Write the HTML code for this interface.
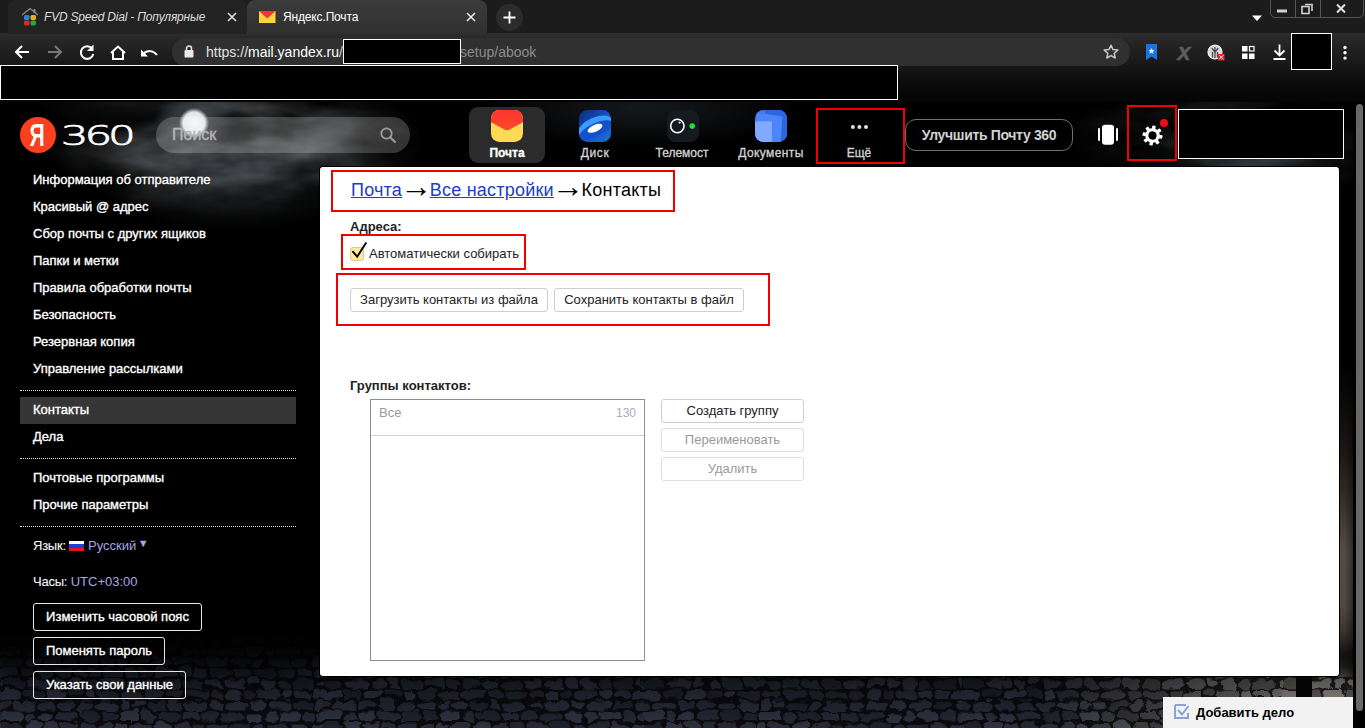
<!DOCTYPE html>
<html lang="ru">
<head>
<meta charset="utf-8">
<title>Яндекс.Почта</title>
<style>
*{box-sizing:border-box;margin:0;padding:0}
html,body{width:1365px;height:728px;overflow:hidden;background:#000;font-family:"Liberation Sans",sans-serif;}
.abs{position:absolute}
#root{position:relative;width:1365px;height:728px;overflow:hidden;background:#000}

/* ---------- browser chrome ---------- */
#chrome{position:absolute;left:0;top:0;width:1365px;height:102px;background:linear-gradient(#1c1c1c 0,#1c1c1c 33px,#2e2e2e 33px,#272727 40px,#1f1f1f 52px,#171717 66px,#0b0b0b 84px,#040404 102px)}
.tab{position:absolute;top:0;height:34px;border-radius:8px 8px 0 0;font-size:12px;line-height:34px;white-space:nowrap}
#tab1{left:8px;width:240px;background:#232323;color:#dcdcdc;font-style:italic;letter-spacing:-.2px}
#tab2{left:247px;width:240px;background:linear-gradient(#3c3c3c,#2f2f2f);color:#fff;letter-spacing:-.15px}
.tab .ttl{position:absolute;top:0}
.tab .cls{position:absolute;top:11px;width:10px;height:10px}
#newtab{position:absolute;left:495.500px;top:3.500px;width:27px;height:27px;border-radius:50%;background:#2c2c2c}
#winbtn{position:absolute;left:1270px;top:-2px;width:94px;height:20px;border:1px solid #555;border-radius:0 0 5px 5px}
#winbtn i{position:absolute;top:0;width:1px;height:18px;background:#555}
#urlbar{position:absolute;left:172px;top:38px;width:958px;height:28px;border-radius:14px;background:#303030}
.url{position:absolute;top:38px;height:28px;line-height:28px;font-size:14px;white-space:nowrap}
.redact{position:absolute;background:#000;border:1px solid #fff}

/* ---------- page ---------- */
#page{position:absolute;left:0;top:102px;width:1365px;height:626px;overflow:hidden;background:#000}

#bg{position:absolute;left:0;top:0;width:1365px;height:626px;background:
 radial-gradient(circle 15px at 194px 21px,rgba(244,245,246,1) 0,rgba(234,236,238,.97) 72%,rgba(180,186,192,.55) 88%,rgba(0,0,0,0) 100%),
 radial-gradient(ellipse 40px 30px at 194px 21px,rgba(130,138,146,.55),rgba(0,0,0,0) 100%),
 radial-gradient(ellipse 110px 30px at 240px 60px,rgba(60,66,72,.4),rgba(0,0,0,0) 100%),
 radial-gradient(ellipse 120px 24px at 150px 2px,rgba(40,45,50,.4),rgba(0,0,0,0) 100%),
 radial-gradient(ellipse 160px 40px at 640px 6px,rgba(40,46,52,.55),rgba(0,0,0,0) 100%),
 radial-gradient(ellipse 140px 60px at 230px 70px,rgba(48,52,56,.6),rgba(0,0,0,0) 100%),
 radial-gradient(ellipse 120px 40px at 1250px 60px,rgba(38,44,48,.7),rgba(0,0,0,0) 100%),
 #000}
#stones{position:absolute;left:0;top:560px;width:1353px;height:66px;background:
 linear-gradient(90deg,rgba(0,0,0,0) 0,rgba(0,0,0,0) 70%,rgba(70,62,54,.55) 92%,rgba(90,84,76,.6) 100%),
 linear-gradient(rgba(0,0,0,1) 0,rgba(20,22,30,1) 30%,rgba(34,37,48,1) 70%,rgba(40,43,54,1) 100%)}
#wall{position:absolute;left:1339px;top:260px;width:14px;height:314px;background:linear-gradient(90deg,rgba(0,0,0,0) 40%,rgba(0,0,0,.4)),linear-gradient(rgba(0,0,0,1) 0,#1c1917 30%,#3d3631 48%,#554b44 60%,#51473f 78%,#3a332e 86%,#141210 93%,#1a1918 97%,#3a3835 100%)}
#sbtrack{position:absolute;left:1353px;top:0;width:12px;height:626px;background:#000}
#sbthumb{position:absolute;left:1356px;top:2px;width:7px;height:607px;border-radius:4px;background:#686868}
#hdr{position:absolute;left:0;top:0;width:1353px;height:66px}
#yalogo{position:absolute;left:20px;top:15px;width:36px;height:36px;border-radius:50%;background:#fc3f1d;color:#fff;font-weight:bold;font-size:31px;line-height:36px;text-align:center}
#yalogo span{display:inline-block;position:relative;left:-1px;top:1px;transform:scaleX(.68)}
#search{position:absolute;left:156px;top:15px;width:254px;height:36px;border-radius:18px;background:rgba(255,255,255,.2)}
#search span{position:absolute;left:16px;top:0;line-height:35px;font-size:16px;color:#b6b6b6;-webkit-text-stroke:.4px #b6b6b6}
#appsel{position:absolute;left:469px;top:5px;width:76px;height:56px;border-radius:9px;background:#2b2b2b}
.applbl{position:absolute;top:43px;font-size:12px;line-height:16px;text-align:center;color:#d4d4d4;white-space:nowrap;-webkit-text-stroke:.3px currentColor}
.redbox{position:absolute;border:2px solid #f20000}
#upg{position:absolute;left:905px;top:17px;width:168px;height:32px;border:1px solid #6f6f6f;border-radius:11px;color:#d2d2d2;font-weight:bold;font-size:14px;line-height:30px;text-align:center;letter-spacing:-.35px;white-space:nowrap}
#side{position:absolute;left:0;top:0;width:320px;height:626px}
#side .it{position:absolute;left:20px;width:276px;height:26px;padding-left:13px;line-height:26px;font-size:13px;color:#fff;white-space:nowrap;-webkit-text-stroke:.35px #fff}
#side .it.sel{background:#363636;height:27px}
#side .it.pl{-webkit-text-stroke:.1px #fff;color:#f4f4f4}
#side .dot{position:absolute;left:20px;width:276px;height:0;border-top:1px dotted #d8d8d8}
#side .lnk{color:#a8a5e0;-webkit-text-stroke:0}
.flag{display:inline-block;width:15px;height:10px;vertical-align:-1px;background:linear-gradient(#fff 0,#fff 33%,#1b3fd0 33%,#1b3fd0 66%,#e8141c 66%)}
.sbtn{position:absolute;left:33px;height:28px;border:1px solid #e8e8e8;border-radius:3px;color:#fff;font-size:13px;line-height:26px;text-align:center;white-space:nowrap;-webkit-text-stroke:.35px #fff}
#panel{position:absolute;left:320px;top:65px;width:1019px;height:509px;border-radius:3px;box-shadow:0 0 0 1px #000;background:#fff;color:#000}
#crumb{position:absolute;left:31px;top:11px;letter-spacing:.22px;font-size:18px;line-height:24px;white-space:nowrap;color:#000}
#crumb .ar{font-size:32px;line-height:0;position:relative;top:1px;margin:0 -7.400px;letter-spacing:0}
#crumb a{color:#1a3dc1;text-decoration:underline}
#panel .h{position:absolute;left:30px;font-weight:bold;font-size:13px;line-height:16px;white-space:nowrap;color:#222}
.t13{position:absolute;font-size:13px;line-height:16px;white-space:nowrap;color:#222}
#cb{position:absolute;left:30px;top:80px;width:14px;height:14px;border:1px solid #dccb85;border-radius:3px;background:#fce9a2}
.btn{position:absolute;height:24px;border:1px solid #cfcfcf;border-radius:3px;background:#fff;font-size:13px;line-height:22px;text-align:center;color:#222;white-space:nowrap}
.btn.dis{color:#9a9a9a;border-color:#dedede}
#list{position:absolute;left:50px;top:232px;width:275px;height:262px;border:1px solid #8f8f8f;background:#fff}
#list .row{height:36px;border-bottom:1px solid #cfcfcf;font-size:13px;line-height:26px;color:#9a9a9a;padding:0 8px}
#list .cnt{float:right;font-size:12px;color:#a9a9c8}
#todo{position:absolute;left:1163px;top:595px;width:190px;height:31px;background:#f2f2f2;font-weight:bold;font-size:13px;line-height:31px;color:#000;white-space:nowrap}
#todo span{position:absolute;left:33px;top:0}
</style>
</head>
<body>
<div id="root">

<!-- ================= PAGE ================= -->
<div id="page">

  <!-- background art -->
  <div id="bg"></div>
  <svg id="clouds" class="abs" style="left:0;top:0" width="1353" height="140" viewBox="0 0 1353 140">
    <defs>
      <filter id="fcl" x="0" y="0" width="100%" height="100%"><feTurbulence type="fractalNoise" baseFrequency="0.011 0.028" numOctaves="4" seed="11"/><feColorMatrix type="matrix" values="0 0 0 0 .55  0 0 0 0 .6  0 0 0 0 .64  1.9 0 0 0 -.62"/></filter>
      <radialGradient id="mcl" cx="235" cy="40" r="190" gradientUnits="userSpaceOnUse" gradientTransform="translate(0 24) scale(1 .4)"><stop offset="0" stop-color="#fff"/><stop offset=".55" stop-color="#fff" stop-opacity=".55"/><stop offset="1" stop-color="#fff" stop-opacity="0"/></radialGradient>
      <radialGradient id="mcl2" cx="1230" cy="40" r="170" gradientUnits="userSpaceOnUse" gradientTransform="translate(0 24) scale(1 .4)"><stop offset="0" stop-color="#fff" stop-opacity=".55"/><stop offset="1" stop-color="#fff" stop-opacity="0"/></radialGradient>
      <mask id="mk"><rect width="1353" height="140" fill="url(#mcl)"/><rect width="1353" height="140" fill="url(#mcl2)"/></mask>
    </defs>
    <rect width="1353" height="140" filter="url(#fcl)" mask="url(#mk)" opacity=".6"/>
  </svg>
  <svg id="cobble" class="abs" style="left:0;top:530px" width="1353" height="96" viewBox="0 0 1353 96">
    <defs>
      <pattern id="stp" width="320" height="66" patternUnits="userSpaceOnUse"><rect x="-5.0" y="1.5" width="13" height="8.0" rx="4.0" fill="#2a2d3a"/><rect x="315.0" y="1.5" width="13" height="8.0" rx="4.0" fill="#2a2d3a"/><rect x="9.5" y="1.0" width="24" height="9.5" rx="4.8" fill="#2d3040"/><rect x="35.0" y="0.5" width="19" height="9.0" rx="4.5" fill="#2a2d3a"/><rect x="56.0" y="0.5" width="17" height="9.5" rx="4.8" fill="#2a2d3a"/><rect x="75.5" y="1.5" width="17" height="9.5" rx="4.8" fill="#2a2d3a"/><rect x="94.0" y="1.5" width="21" height="9.5" rx="4.8" fill="#2d3040"/><rect x="117.0" y="0.5" width="11" height="9.0" rx="4.5" fill="#2d3040"/><rect x="129.5" y="0.5" width="15" height="8.0" rx="4.0" fill="#2d3040"/><rect x="146.0" y="1.5" width="20" height="8.5" rx="4.2" fill="#232630"/><rect x="167.5" y="1.0" width="12" height="9.0" rx="4.5" fill="#2a2d3a"/><rect x="182.0" y="1.5" width="22" height="9.5" rx="4.8" fill="#2a2d3a"/><rect x="206.5" y="1.5" width="14" height="8.0" rx="4.0" fill="#2d3040"/><rect x="222.5" y="1.0" width="23" height="8.5" rx="4.2" fill="#2d3040"/><rect x="247.5" y="0.5" width="16" height="8.5" rx="4.2" fill="#303444"/><rect x="266.0" y="0.5" width="23" height="9.0" rx="4.5" fill="#2d3040"/><rect x="291.0" y="1.0" width="19" height="8.0" rx="4.0" fill="#232630"/><rect x="312.0" y="0.5" width="15" height="9.5" rx="4.8" fill="#2d3040"/><rect x="-2.0" y="11.5" width="23" height="8.5" rx="4.2" fill="#353949"/><rect x="318.0" y="11.5" width="23" height="8.5" rx="4.2" fill="#353949"/><rect x="23.0" y="12.5" width="11" height="9.5" rx="4.8" fill="#2d3040"/><rect x="36.0" y="12.5" width="16" height="8.5" rx="4.2" fill="#353949"/><rect x="54.5" y="11.5" width="23" height="8.0" rx="4.0" fill="#2a2d3a"/><rect x="79.5" y="11.5" width="18" height="9.5" rx="4.8" fill="#232630"/><rect x="100.0" y="12.0" width="15" height="8.0" rx="4.0" fill="#232630"/><rect x="117.0" y="11.5" width="21" height="8.5" rx="4.2" fill="#353949"/><rect x="140.0" y="12.0" width="13" height="9.5" rx="4.8" fill="#2a2d3a"/><rect x="154.5" y="11.5" width="23" height="8.5" rx="4.2" fill="#232630"/><rect x="179.0" y="12.0" width="17" height="8.0" rx="4.0" fill="#2a2d3a"/><rect x="197.5" y="12.5" width="18" height="8.0" rx="4.0" fill="#262934"/><rect x="217.0" y="12.5" width="24" height="8.0" rx="4.0" fill="#262934"/><rect x="243.5" y="12.5" width="17" height="8.5" rx="4.2" fill="#353949"/><rect x="262.0" y="11.5" width="13" height="9.5" rx="4.8" fill="#303444"/><rect x="276.5" y="11.5" width="21" height="9.0" rx="4.5" fill="#353949"/><rect x="300.0" y="12.0" width="13" height="8.5" rx="4.2" fill="#2a2d3a"/><rect x="314.5" y="12.5" width="17" height="8.5" rx="4.2" fill="#2d3040"/><rect x="-2.0" y="23.0" width="22" height="9.5" rx="4.8" fill="#232630"/><rect x="318.0" y="23.0" width="22" height="9.5" rx="4.8" fill="#232630"/><rect x="22.5" y="23.0" width="17" height="8.0" rx="4.0" fill="#353949"/><rect x="41.0" y="22.5" width="18" height="8.0" rx="4.0" fill="#303444"/><rect x="60.5" y="22.5" width="14" height="8.0" rx="4.0" fill="#2a2d3a"/><rect x="76.5" y="22.5" width="20" height="9.5" rx="4.8" fill="#2a2d3a"/><rect x="99.0" y="23.0" width="13" height="9.5" rx="4.8" fill="#2d3040"/><rect x="113.5" y="23.5" width="12" height="9.0" rx="4.5" fill="#353949"/><rect x="127.0" y="23.0" width="21" height="8.5" rx="4.2" fill="#2d3040"/><rect x="150.0" y="22.5" width="18" height="9.5" rx="4.8" fill="#353949"/><rect x="170.0" y="23.0" width="18" height="8.0" rx="4.0" fill="#2a2d3a"/><rect x="189.5" y="23.5" width="12" height="8.5" rx="4.2" fill="#262934"/><rect x="203.5" y="23.5" width="24" height="9.0" rx="4.5" fill="#2a2d3a"/><rect x="229.0" y="22.5" width="19" height="8.5" rx="4.2" fill="#232630"/><rect x="250.5" y="23.5" width="11" height="8.5" rx="4.2" fill="#2a2d3a"/><rect x="264.0" y="23.5" width="24" height="8.5" rx="4.2" fill="#262934"/><rect x="289.5" y="23.5" width="16" height="9.0" rx="4.5" fill="#2d3040"/><rect x="308.0" y="23.5" width="16" height="9.0" rx="4.5" fill="#303444"/><rect x="-6.0" y="33.5" width="22" height="9.0" rx="4.5" fill="#2d3040"/><rect x="314.0" y="33.5" width="22" height="9.0" rx="4.5" fill="#2d3040"/><rect x="18.0" y="33.5" width="16" height="9.5" rx="4.8" fill="#262934"/><rect x="36.0" y="34.5" width="15" height="9.0" rx="4.5" fill="#2d3040"/><rect x="53.0" y="34.0" width="18" height="8.5" rx="4.2" fill="#2a2d3a"/><rect x="72.5" y="34.0" width="12" height="9.0" rx="4.5" fill="#303444"/><rect x="86.5" y="34.5" width="14" height="8.0" rx="4.0" fill="#2d3040"/><rect x="102.0" y="34.5" width="18" height="8.5" rx="4.2" fill="#2a2d3a"/><rect x="122.5" y="34.5" width="12" height="8.0" rx="4.0" fill="#303444"/><rect x="136.5" y="34.5" width="13" height="8.0" rx="4.0" fill="#262934"/><rect x="151.0" y="34.0" width="23" height="8.0" rx="4.0" fill="#353949"/><rect x="176.5" y="33.5" width="12" height="9.0" rx="4.5" fill="#303444"/><rect x="190.0" y="34.5" width="13" height="8.0" rx="4.0" fill="#303444"/><rect x="205.5" y="34.5" width="24" height="8.0" rx="4.0" fill="#262934"/><rect x="231.0" y="33.5" width="19" height="9.0" rx="4.5" fill="#2a2d3a"/><rect x="252.5" y="34.5" width="21" height="9.5" rx="4.8" fill="#232630"/><rect x="275.0" y="33.5" width="17" height="9.0" rx="4.5" fill="#2a2d3a"/><rect x="294.0" y="34.5" width="14" height="8.5" rx="4.2" fill="#303444"/><rect x="310.5" y="34.5" width="16" height="8.5" rx="4.2" fill="#353949"/><rect x="0.0" y="45.0" width="22" height="8.5" rx="4.2" fill="#232630"/><rect x="24.5" y="45.5" width="24" height="8.0" rx="4.0" fill="#303444"/><rect x="51.0" y="45.0" width="13" height="9.5" rx="4.8" fill="#303444"/><rect x="66.5" y="44.5" width="11" height="9.0" rx="4.5" fill="#303444"/><rect x="79.5" y="45.5" width="20" height="9.5" rx="4.8" fill="#2a2d3a"/><rect x="101.5" y="44.5" width="21" height="8.0" rx="4.0" fill="#2d3040"/><rect x="124.0" y="45.0" width="14" height="9.0" rx="4.5" fill="#2a2d3a"/><rect x="139.5" y="45.5" width="19" height="8.0" rx="4.0" fill="#2a2d3a"/><rect x="160.0" y="45.5" width="18" height="8.5" rx="4.2" fill="#2d3040"/><rect x="180.5" y="45.5" width="19" height="9.0" rx="4.5" fill="#262934"/><rect x="201.5" y="45.5" width="19" height="8.0" rx="4.0" fill="#303444"/><rect x="223.0" y="45.5" width="19" height="8.5" rx="4.2" fill="#303444"/><rect x="244.0" y="44.5" width="13" height="8.0" rx="4.0" fill="#353949"/><rect x="259.0" y="45.5" width="16" height="9.5" rx="4.8" fill="#303444"/><rect x="277.0" y="45.5" width="12" height="9.0" rx="4.5" fill="#262934"/><rect x="290.5" y="45.5" width="23" height="9.0" rx="4.5" fill="#232630"/><rect x="316.0" y="45.0" width="16" height="9.0" rx="4.5" fill="#303444"/><rect x="-3.0" y="56.0" width="22" height="9.5" rx="4.8" fill="#353949"/><rect x="317.0" y="56.0" width="22" height="9.5" rx="4.8" fill="#353949"/><rect x="20.5" y="55.5" width="21" height="9.0" rx="4.5" fill="#232630"/><rect x="43.5" y="56.0" width="19" height="8.0" rx="4.0" fill="#353949"/><rect x="64.0" y="55.5" width="16" height="8.5" rx="4.2" fill="#232630"/><rect x="82.0" y="56.5" width="11" height="8.5" rx="4.2" fill="#353949"/><rect x="95.0" y="56.0" width="22" height="9.5" rx="4.8" fill="#262934"/><rect x="119.5" y="56.5" width="20" height="8.5" rx="4.2" fill="#2a2d3a"/><rect x="141.0" y="55.5" width="23" height="9.0" rx="4.5" fill="#2a2d3a"/><rect x="166.0" y="55.5" width="15" height="9.5" rx="4.8" fill="#262934"/><rect x="182.5" y="56.5" width="24" height="8.0" rx="4.0" fill="#262934"/><rect x="208.5" y="56.5" width="13" height="8.0" rx="4.0" fill="#262934"/><rect x="223.0" y="56.5" width="15" height="9.5" rx="4.8" fill="#303444"/><rect x="240.0" y="55.5" width="12" height="8.5" rx="4.2" fill="#232630"/><rect x="253.5" y="55.5" width="23" height="8.5" rx="4.2" fill="#2d3040"/><rect x="278.0" y="55.5" width="12" height="8.5" rx="4.2" fill="#353949"/><rect x="291.5" y="56.0" width="16" height="8.0" rx="4.0" fill="#2d3040"/><rect x="309.0" y="55.5" width="11" height="9.0" rx="4.5" fill="#303444"/></pattern>
      <filter id="fst" x="0" y="0" width="100%" height="100%"><feTurbulence type="turbulence" baseFrequency="0.045 0.07" numOctaves="2" seed="3" result="n"/><feDisplacementMap in="SourceGraphic" in2="n" scale="9" xChannelSelector="R" yChannelSelector="G"/><feGaussianBlur stdDeviation=".55"/></filter>
      <linearGradient id="stfade" x1="0" y1="0" x2="0" y2="1"><stop offset="0" stop-color="#000" stop-opacity="1"/><stop offset=".2" stop-color="#000" stop-opacity=".92"/><stop offset=".55" stop-color="#000" stop-opacity=".45"/><stop offset="1" stop-color="#000" stop-opacity=".12"/></linearGradient>
      <filter id="fst2" x="0" y="0" width="100%" height="100%" color-interpolation-filters="sRGB"><feTurbulence type="turbulence" baseFrequency="0.045 0.07" numOctaves="2" seed="3" result="n"/><feDisplacementMap in="SourceGraphic" in2="n" scale="9" xChannelSelector="R" yChannelSelector="G"/><feGaussianBlur stdDeviation=".55"/><feColorMatrix type="matrix" values="2.300 0 0 0 0  0 2.050 0 0 0  0 0 1.500 0 0  0 0 0 1 0"/></filter>
      <linearGradient id="gwm" x1="0" y1="0" x2="1" y2="0"><stop offset="0" stop-color="#fff" stop-opacity="0"/><stop offset=".76" stop-color="#fff" stop-opacity="0"/><stop offset=".9" stop-color="#fff" stop-opacity=".6"/><stop offset=".97" stop-color="#fff" stop-opacity="1"/></linearGradient>
      <linearGradient id="gwv" x1="0" y1="0" x2="0" y2="1"><stop offset="0" stop-color="#000" stop-opacity="1"/><stop offset=".25" stop-color="#000" stop-opacity="1"/><stop offset=".5" stop-color="#000" stop-opacity=".25"/><stop offset=".7" stop-color="#000" stop-opacity="0"/></linearGradient>
      <mask id="mwarm"><rect width="1353" height="96" fill="url(#gwm)"/><rect width="1353" height="96" fill="url(#gwv)"/></mask>
      <linearGradient id="stwarm" x1="0" y1="0" x2="1" y2="0"><stop offset="0" stop-color="#8a7c6c" stop-opacity="0"/><stop offset=".8" stop-color="#8a7c6c" stop-opacity="0"/><stop offset=".9" stop-color="#8a7c6c" stop-opacity=".4"/><stop offset="1" stop-color="#a89c8e" stop-opacity=".72"/></linearGradient>
    </defs>
    <rect width="1353" height="96" fill="#0d0d12"/>
    <rect x="-10" y="-10" width="1373" height="116" fill="url(#stp)" filter="url(#fst)"/>
        <rect width="1353" height="96" fill="url(#stfade)"/>
    <g mask="url(#mwarm)"><rect width="1353" height="96" fill="#1c1a19"/><rect x="-10" y="-10" width="1373" height="116" fill="url(#stp)" filter="url(#fst2)"/></g>
    <rect x="1296" y="40" width="16" height="28" fill="#050505"/>
  </svg>
  <div id="wall"></div>
  <div id="sbtrack"></div><div id="sbthumb"></div>

  <!-- header -->
  <div id="hdr">
    <div id="yalogo"><span>Я</span></div>
    <svg class="abs" id="l360" style="left:60px;top:18px" width="76" height="30" viewBox="0 0 76 30">
      <text transform="translate(0.800 25) scale(1.680 1)" x="0" y="0" font-family="DejaVu Sans,sans-serif" font-weight="200" font-size="26" letter-spacing="-2.500" fill="#fff" stroke="#fff" stroke-width="0.700">360</text>
    </svg>
    <div id="search"><span>Поиск</span>
      <svg class="abs" style="left:223px;top:9px" width="18" height="18" viewBox="0 0 18 18"><circle cx="7.500" cy="7.500" r="5.200" fill="none" stroke="#9c9c9c" stroke-width="1.800"/><path d="M11.500 11.500L16 16" stroke="#9c9c9c" stroke-width="2" stroke-linecap="round"/></svg>
    </div>

    <div id="appsel"></div>
    <!-- Почта -->
    <svg class="abs" style="left:491px;top:8px" width="32" height="32" viewBox="0 0 34 34">
      <defs><clipPath id="cp1"><rect width="34" height="34" rx="9"/></clipPath>
      <linearGradient id="gm" x1="0" y1="0" x2="0" y2="1"><stop offset="0" stop-color="#ff3330"/><stop offset="1" stop-color="#fb4a2c"/></linearGradient></defs>
      <g clip-path="url(#cp1)"><rect width="34" height="34" fill="#ffda55"/><path d="M-1 -1H35V12.500L19.800 20.800Q17 22.300 14.200 20.800L-1 12.500Z" fill="url(#gm)"/></g>
    </svg>
    <div class="applbl" style="left:467px;width:80px;font-weight:bold;color:#fff">Почта</div>
    <!-- Диск -->
    <svg class="abs" style="left:579px;top:8px" width="32" height="32" viewBox="0 0 34 34">
      <defs><clipPath id="cp2"><rect width="34" height="34" rx="9"/></clipPath>
      <linearGradient id="gd" x1="0" y1="0" x2="1" y2="1"><stop offset="0" stop-color="#0a2c7e"/><stop offset=".5" stop-color="#1450c0"/><stop offset="1" stop-color="#1f6fe2"/></linearGradient></defs>
      <g clip-path="url(#cp2)"><rect width="34" height="34" fill="url(#gd)"/>
      <ellipse cx="17" cy="17" rx="19" ry="9" transform="rotate(-24 17 17)" fill="#3d9bff"/>
      <ellipse cx="18" cy="21" rx="19" ry="7" transform="rotate(-24 18 21)" fill="#1152c8"/>
      <ellipse cx="17" cy="19.500" rx="8.500" ry="3.600" transform="rotate(-24 17 19.500)" fill="#fff"/></g>
    </svg>
    <div class="applbl" style="left:555px;width:80px;letter-spacing:.6px">Диск</div>
    <!-- Телемост -->
    <svg class="abs" style="left:667px;top:8px" width="32" height="32" viewBox="0 0 34 34">
      <rect width="34" height="34" rx="9" fill="#141a1e"/>
      <circle cx="11" cy="17" r="7.100" fill="none" stroke="#fff" stroke-width="1.700"/>
      <circle cx="13.400" cy="13.300" r="1.200" fill="#ddd"/>
      <circle cx="26.800" cy="17" r="3" fill="#1fe03a"/>
    </svg>
    <div class="applbl" style="left:642px;width:80px">Телемост</div>
    <!-- Документы -->
    <svg class="abs" style="left:755px;top:8px" width="32" height="32" viewBox="0 0 34 34">
      <defs><clipPath id="cp4"><rect width="34" height="34" rx="9"/></clipPath></defs>
      <g clip-path="url(#cp4)"><rect width="34" height="34" fill="#3f7df0"/>
      <path d="M10 -2L40 1L37 38L16 38Z" fill="#2f66e0"/>
      <path d="M2 3L29 7L27 38L2 38Z" fill="#4a86f7"/>
      <rect x="0" y="12" width="18" height="24" fill="#80a9ff"/></g>
    </svg>
    <div class="applbl" style="left:731px;width:80px;letter-spacing:.4px">Документы</div>
    <!-- Ещё -->
    <div class="redbox" style="left:816px;top:6px;width:89px;height:56px"></div>
    <svg class="abs" style="left:849px;top:22px" width="20" height="6" viewBox="0 0 20 6"><circle cx="3.900" cy="3" r="2" fill="#e0e0e0"/><circle cx="10.400" cy="3" r="2" fill="#e0e0e0"/><circle cx="17" cy="3" r="2" fill="#e0e0e0"/></svg>
    <div class="applbl" style="left:819px;width:80px">Ещё</div>

    <div id="upg">Улучшить Почту 360</div>
    <svg class="abs" style="left:1097px;top:22px" width="22" height="22" viewBox="0 0 22 22"><rect x="5" y="0.800" width="12" height="20" rx="3" fill="#fff"/><rect x="1" y="4" width="2" height="13" rx="1" fill="#fff"/><rect x="19" y="4" width="2" height="13" rx="1" fill="#fff"/></svg>
    <div class="redbox" style="left:1127px;top:3px;width:50px;height:56px"></div>
    <svg class="abs" style="left:1141.500px;top:22.500px;transform:rotate(9deg)" width="21" height="21" viewBox="0 0 22 22">
      <g fill="#fff"><rect x="9.200" y="0.500" width="3.600" height="21" rx="0.600"/><rect x="9.200" y="0.500" width="3.600" height="21" rx="0.600" transform="rotate(45 11 11)"/><rect x="9.200" y="0.500" width="3.600" height="21" rx="0.600" transform="rotate(90 11 11)"/><rect x="9.200" y="0.500" width="3.600" height="21" rx="0.600" transform="rotate(135 11 11)"/><circle cx="11" cy="11" r="7.600"/></g>
      <circle cx="11" cy="11" r="4.300" fill="#000"/>
    </svg>
    <div class="abs" style="left:1160px;top:17px;width:8px;height:8px;border-radius:50%;background:#f00a1a"></div>
    <div class="redact" style="left:1178px;top:7px;width:166px;height:50px"></div>
  </div>

  <!-- sidebar -->
  <div id="side">
    <div class="it" style="top:65px">Информация об отправителе</div>
    <div class="it" style="top:92px">Красивый @ адрес</div>
    <div class="it" style="top:119px">Сбор почты с других ящиков</div>
    <div class="it" style="top:146px">Папки и метки</div>
    <div class="it" style="top:173px">Правила обработки почты</div>
    <div class="it" style="top:200px">Безопасность</div>
    <div class="it" style="top:227px">Резервная копия</div>
    <div class="it" style="top:254px">Управление рассылками</div>
    <div class="dot" style="top:288px"></div>
    <div class="it sel" style="top:295px">Контакты</div>
    <div class="it" style="top:322px">Дела</div>
    <div class="dot" style="top:356px"></div>
    <div class="it" style="top:363px">Почтовые программы</div>
    <div class="it" style="top:390px">Прочие параметры</div>
    <div class="dot" style="top:424px"></div>
    <div class="it pl" style="top:431px"><span style="letter-spacing:-.25px">Язык:</span> <span class="flag"></span><span class="lnk"> Русский</span> <span class="lnk" style="font-size:11px;position:relative;top:-3px;margin-left:-2px">▼</span></div>
    <div class="it pl" style="top:467px"><span style="letter-spacing:-.25px">Часы:</span> <span class="lnk">UTC+03:00</span></div>
    <div class="sbtn" style="top:501px;width:169px">Изменить часовой пояс</div>
    <div class="sbtn" style="top:535px;width:132px">Поменять пароль</div>
    <div class="sbtn" style="top:569px;width:153px">Указать свои данные</div>
  </div>

  <!-- content panel -->
  <div id="panel">
    <div class="redbox" style="left:11px;top:3px;width:344px;height:42px"></div>
    <div id="crumb"><a>Почта</a> <span class="ar">→</span> <a>Все настройки</a> <span class="ar">→</span> Контакты</div>
    <div class="h" style="top:52px">Адреса:</div>
    <div class="redbox" style="left:21px;top:67px;width:185px;height:36px"></div>
    <div id="cb"></div>
    <svg class="abs" style="left:30px;top:74px" width="18" height="18" viewBox="0 0 18 18"><path d="M2.400 10.200L7.200 15.600L16.300 1.600" fill="none" stroke="#000" stroke-width="1.900"/></svg>
    <div class="t13" style="left:49px;top:79px">Автоматически собирать</div>
    <div class="redbox" style="left:16px;top:106px;width:434px;height:53px"></div>
    <div class="btn" style="left:30px;top:121px;width:198px">Загрузить контакты из файла</div>
    <div class="btn" style="left:234px;top:121px;width:190px">Сохранить контакты в файл</div>
    <div class="h" style="top:211px">Группы контактов:</div>
    <div id="list"><div class="row"><span>Все</span><span class="cnt">130</span></div></div>
    <div class="btn" style="left:341px;top:232px;width:143px">Создать группу</div>
    <div class="btn dis" style="left:341px;top:261px;width:143px">Переименовать</div>
    <div class="btn dis" style="left:341px;top:290px;width:143px">Удалить</div>
  </div>

  <!-- add task widget -->
  <div id="todo">
    <svg class="abs" style="left:11px;top:7px" width="16" height="16" viewBox="0 0 16 16"><path d="M1 1H12M1 1V14H14V9" fill="none" stroke="#8aa4d6" stroke-width="2"/><path d="M4 6L8 10.500L14.500 2" fill="none" stroke="#8aa4d6" stroke-width="2"/></svg>
    <span>Добавить дело</span>
  </div>

</div>

<!-- ================= BROWSER CHROME ================= -->
<div id="chrome">
  <div class="tab" id="tab1">
    <svg class="abs" style="left:13px;top:7px" width="18" height="19" viewBox="0 0 18 19">
      <path d="M1 8 L9 1.5 L17 8" fill="none" stroke="#8a8a8a" stroke-width="1.3"/>
      <rect x="12.5" y="2" width="2" height="4" fill="#8a8a8a"/>
      <rect x="3" y="8" width="5.5" height="5" rx="1.5" fill="#1e88e5"/>
      <rect x="9.5" y="8" width="5.5" height="5" rx="1.5" fill="#f5a623"/>
      <rect x="3" y="13.5" width="5.5" height="5" rx="1.5" fill="#e02a1f"/>
      <rect x="9.5" y="13.5" width="5.5" height="5" rx="1.5" fill="#22a63a"/>
    </svg>
    <span class="ttl" style="left:36px">FVD Speed Dial - Популярные</span>
    <svg class="cls" style="left:219px;top:12px" viewBox="0 0 10 10"><path d="M1 1L9 9M9 1L1 9" stroke="#e6e6e6" stroke-width="1.5"/></svg>
  </div>
  <div class="tab" id="tab2">
    <svg class="abs" style="left:12px;top:11px" width="16.500" height="12" viewBox="0 0 16 13" preserveAspectRatio="none">
      <rect width="16" height="13" fill="#ffd43a"/>
      <path d="M0 0H16L8 8Z" fill="#f0392b"/>
    </svg>
    <span class="ttl" style="left:36px">Яндекс.Почта</span>
    <svg class="cls" style="left:219px;top:12px" viewBox="0 0 10 10"><path d="M1 1L9 9M9 1L1 9" stroke="#f2f2f2" stroke-width="1.5"/></svg>
  </div>
  <div id="newtab"><svg class="abs" style="left:7px;top:7px" width="13" height="13" viewBox="0 0 13 13"><path d="M6.5 0.5V12.5M0.5 6.5H12.5" stroke="#fff" stroke-width="1.8"/></svg></div>

  <svg class="abs" style="left:1251px;top:15px" width="12" height="7" viewBox="0 0 12 7"><path d="M1 0.5H11L6 6Z" fill="#fff"/></svg>
  <div id="winbtn">
    <i style="left:24px"></i><i style="left:49px"></i>
    <svg class="abs" style="left:0;top:1px" width="92" height="18" viewBox="0 0 92 18">
      <rect x="6" y="9.5" width="10" height="3" fill="#d0d0d0"/>
      <rect x="31" y="6.5" width="7" height="7" fill="none" stroke="#d0d0d0" stroke-width="1.6"/>
      <path d="M34 4.5H41V11" fill="none" stroke="#d0d0d0" stroke-width="1.6"/>
      <path d="M66 4.5L74 12.5M74 4.5L66 12.5" stroke="#e0e0e0" stroke-width="2"/>
    </svg>
  </div>

  <!-- nav icons -->
  <svg class="abs" style="left:12px;top:42px" width="156" height="22" viewBox="0 0 156 22">
    <g fill="none" stroke="#fff" stroke-width="2">
      <path d="M17 10H4M10 4L4 10L10 16"/>
      <path d="M36 10H49M43 4L49 10L43 16" stroke="#777"/>
      <path d="M80 6.5A6.3 6.3 0 1 0 81.3 12"/>
      <path d="M99 11L106 4.5L113 11M101 10V17H111V10"/>
      <path d="M145 13C141 8 135 8 131 12"/>
    </g>
    <path d="M81.5 2.5V9H75Z" fill="#fff"/>
    <path d="M129 7.5V14.5H136Z" fill="#fff"/>
  </svg>

  <div id="urlbar"></div>
  <svg class="abs" style="left:184px;top:45px" width="10" height="13" viewBox="0 0 10 13">
    <rect x="0.5" y="5" width="9" height="7.5" rx="1" fill="#e8e8e8"/>
    <path d="M2.5 5.5V3.5A2.5 2.5 0 0 1 7.5 3.5V5.5" fill="none" stroke="#e8e8e8" stroke-width="1.5"/>
  </svg>
  <div class="url" style="left:206px"><span style="color:#e2e2e2">https://</span><span style="color:#fff">mail.yandex.ru</span><span style="color:#d0d0d0">/</span></div>
  <div class="redact" style="left:343px;top:39px;width:118px;height:25px"></div>
  <div class="url" style="left:460px;color:#8d8d8d">setup/abook</div>

  <!-- right toolbar icons -->
  <svg class="abs" style="left:1100px;top:40px" width="260" height="26" viewBox="0 0 260 26">
    <path d="M11 5.2l2 4.4 4.8.5-3.6 3.2 1 4.7L11 15.600l-4.200 2.400 1-4.700L4.200 10.100l4.800-.5z" fill="none" stroke="#c8c8c8" stroke-width="1.5" stroke-linejoin="round"/>
    <path d="M46 4H57V20L51.500 16.500L46 20Z" fill="#1a73e8"/>
    <path d="M51.500 8l.9 2 2.100.2-1.600 1.400.5 2.100-1.900-1.100-1.900 1.100.5-2.100-1.600-1.400 2.100-.2z" fill="#fff"/>
    <text x="77.500" y="19.500" font-family="Liberation Sans,sans-serif" font-style="italic" font-weight="bold" font-size="19" fill="#5e5e5e" stroke="#5e5e5e" stroke-width=".7">X</text>
    <circle cx="115" cy="12" r="7" fill="#d9d9d9" stroke="#f2f2f2" stroke-width="1.200"/>
    <path d="M115 7V18M111.800 8L115 12.500L118.200 8M112.500 17.500V12M117.500 17.500V12" stroke="#4a4a4a" stroke-width="1.300" fill="none"/>
    <rect x="118" y="14" width="6.500" height="6.500" fill="#e8231c"/>
    <path d="M119.300 15.300l4 4m0-4l-4 4" stroke="#fff" stroke-width="1"/>
    <rect x="142" y="6" width="5.500" height="5.500" fill="#fff"/><rect x="149.500" y="6.500" width="4.500" height="4.500" fill="none" stroke="#fff" stroke-width="1.200"/>
    <rect x="142" y="13.500" width="5.500" height="5.500" fill="#fff"/><rect x="149" y="13.500" width="5.500" height="5.500" fill="#fff"/>
    <path d="M179.500 4.500V15M174.500 10.500L179.500 15.500L184.500 10.500M173.500 19H185.500" fill="none" stroke="#fff" stroke-width="1.800"/>
    <circle cx="245" cy="7.500" r="1.700" fill="#fff"/><circle cx="245" cy="12.800" r="1.700" fill="#fff"/><circle cx="245" cy="18.100" r="1.700" fill="#fff"/>
  </svg>
  <div class="redact" style="left:1291px;top:33px;width:41px;height:37px"></div>

  <!-- bookmarks bar redaction -->
  <div class="redact" style="left:0;top:65px;width:898px;height:35px"></div>
</div>

</div>
</body>
</html>
